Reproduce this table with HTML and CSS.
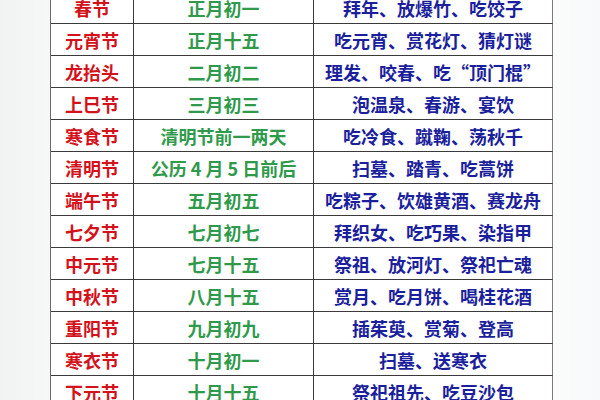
FILE: index.html
```html
<!DOCTYPE html>
<html lang="zh-CN">
<head>
<meta charset="utf-8">
<link rel="stylesheet" href="styles.css">
</head>
<body>
<div class="page">
  <div class="table">
    <div class="c name">春节</div><div class="c date">正月初一</div><div class="c custom">拜年、放爆竹、吃饺子</div>
    <div class="c name">元宵节</div><div class="c date">正月十五</div><div class="c custom">吃元宵、赏花灯、猜灯谜</div>
    <div class="c name">龙抬头</div><div class="c date">二月初二</div><div class="c custom">理发、咬春、吃“顶门棍”</div>
    <div class="c name">上巳节</div><div class="c date">三月初三</div><div class="c custom">泡温泉、春游、宴饮</div>
    <div class="c name">寒食节</div><div class="c date">清明节前一两天</div><div class="c custom">吃冷食、蹴鞠、荡秋千</div>
    <div class="c name">清明节</div><div class="c date">公历 4 月 5 日前后</div><div class="c custom">扫墓、踏青、吃蒿饼</div>
    <div class="c name">端午节</div><div class="c date">五月初五</div><div class="c custom">吃粽子、饮雄黄酒、赛龙舟</div>
    <div class="c name">七夕节</div><div class="c date">七月初七</div><div class="c custom">拜织女、吃巧果、染指甲</div>
    <div class="c name">中元节</div><div class="c date">七月十五</div><div class="c custom">祭祖、放河灯、祭祀亡魂</div>
    <div class="c name">中秋节</div><div class="c date">八月十五</div><div class="c custom">赏月、吃月饼、喝桂花酒</div>
    <div class="c name">重阳节</div><div class="c date">九月初九</div><div class="c custom">插茱萸、赏菊、登高</div>
    <div class="c name">寒衣节</div><div class="c date">十月初一</div><div class="c custom">扫墓、送寒衣</div>
    <div class="c name">下元节</div><div class="c date">十月十五</div><div class="c custom">祭祀祖先、吃豆沙包</div>
  </div>
</div>
</body>
</html>
```
FILE: styles.css
```css
html, body {
  margin: 0;
  padding: 0;
}
body {
  width: 600px;
  height: 400px;
  overflow: hidden;
  background: linear-gradient(90deg, #f1f3f3 0%, #f6f8f8 8%, #fbfcfc 92%, #f7f9fa 100%);
  font-family: "Noto Sans CJK SC", "Noto Sans", sans-serif;
  font-weight: 700;
  font-size: 18px;
}
.page {
  padding-left: 50px;
  margin-top: -9px;
}
.table {
  display: grid;
  grid-template-columns: 83px 180px 239px;
  grid-auto-rows: 32px;
  width: max-content;
  border-left: 1px solid #6a6a6a;
  border-top: 1px solid #444;
  background: #ffffff;
}
.c {
  box-sizing: border-box;
  display: flex;
  align-items: center;
  justify-content: center;
  border-right: 1px solid #3a3a3a;
  border-bottom: 1px solid #3a3a3a;
  white-space: nowrap;
  line-height: 1;
}
.c.custom {
  border-right-color: #7a7a7a;
}
.name {
  color: #d3121c;
}
.date {
  color: #2f9a4b;
}
.custom {
  color: #1c1f9c;
}
```
